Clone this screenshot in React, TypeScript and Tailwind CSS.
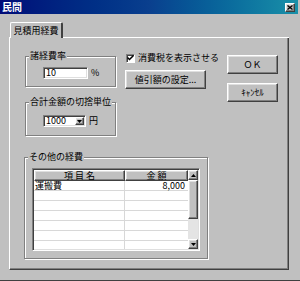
import React from 'react';

const raised =
  'border border-t-white border-l-white border-r-[#404040] border-b-[#404040] shadow-[inset_-1px_-1px_0_#808080,inset_1px_1px_0_#dfdfdf]';
const sunken =
  'border border-t-[#808080] border-l-[#808080] border-r-white border-b-white shadow-[inset_1px_1px_0_#404040,inset_-1px_-1px_0_#dfdfdf] p-[1px]';

function GroupBox({ label, className, children }: { label: string; className: string; children?: React.ReactNode }) {
  return (
    <fieldset className={`min-w-0 border border-[#808080] shadow-[1px_1px_0_#fff,inset_1px_1px_0_#fff] ${className}`}>
      <legend className="ml-[3px] px-[1px] bg-[#c0c0c0] leading-[10px] whitespace-nowrap">{label}</legend>
      {children}
    </fieldset>
  );
}

function Arrow({ down }: { down?: boolean }) {
  return (
    <svg width="5" height="3" viewBox="0 0 5 3">
      <polygon points={down ? '0,0 5,0 2.5,3' : '0,3 5,3 2.5,0'} fill="#000" />
    </svg>
  );
}

export default function App() {
  const rows = ['運搬費', '', '', '', '', '', ''];
  return (
    <div className="w-[300px] h-[281px] bg-[#c0c0c0] flex flex-col border-b border-b-[#404040] pr-[2px] font-['Noto_Sans_CJK_JP',sans-serif] text-[9px] leading-[10px] text-black">
      {/* title bar */}
      <div className="h-[14px] shrink-0 flex items-center justify-between bg-linear-to-r from-[#000a78] via-[#0a3f8e] to-[#1a90a8] pl-[2px] pr-[3px]">
        <span className="text-white font-bold text-[10px] leading-[10px]">民間</span>
        <div className={`w-[10px] h-[9px] bg-[#c0c0c0] flex items-center justify-center ${raised}`}>
          <svg width="6" height="5" viewBox="0 0 6 5">
            <path d="M0.5 0.5 L5.5 4.5 M5.5 0.5 L0.5 4.5" stroke="#000" strokeWidth="1.3" />
          </svg>
        </div>
      </div>

      <div className="h-[266px] shrink-0 flex flex-col pl-[9px] pt-[8px] pr-[9px]">
        {/* tab strip */}
        <div className="h-[16px] shrink-0 flex items-end">
          <div className="w-[1px] h-[1px] bg-white" />
          <div className="w-[53px] h-[16px] border-l border-t border-white border-r-2 border-r-[#404040] rounded-t-[2px] flex items-center justify-center">
            見積用経費
          </div>
          <div className="flex-1 h-[1px] bg-white" />
        </div>

        {/* panel */}
        <div className="h-[232px] shrink-0 flex flex-col border-l border-l-white border-r border-r-[#404040] border-b border-b-[#404040] shadow-[inset_-1px_-1px_0_#808080] pl-[15px] pt-[13px]">
          <div className="flex items-start">
            <div className="w-[91px] flex flex-col">
              <GroupBox label="諸経費率" className="h-[36px]">
                <div className="flex items-center pl-[17px] pt-[6px]">
                  <div className={`w-[45px] h-[12px] bg-white flex items-center pl-[2px] ${sunken}`}>10</div>
                  <span className="ml-[3px]">%</span>
                </div>
              </GroupBox>
              <GroupBox label="合計金額の切捨単位" className="mt-[10px] h-[39px]">
                <div className="flex items-center pl-[17px] pt-[8px]">
                  <div className={`w-[43px] h-[12px] bg-white flex items-center ${sunken}`}>
                    <span className="flex-1 pl-[1px]">1000</span>
                    <div className={`w-[9px] h-[8px] bg-[#c0c0c0] flex items-center justify-center ${raised}`}>
                      <Arrow down />
                    </div>
                  </div>
                  <span className="ml-[3px]">円</span>
                </div>
              </GroupBox>
            </div>

            <div className="ml-[9px] w-[81px] flex flex-col">
              <div className="mt-[2px] ml-[1px] flex items-center">
                <div className="w-[9px] h-[9px] shrink-0 bg-white flex items-center justify-center border border-t-[#808080] border-l-[#808080] border-r-white border-b-white shadow-[inset_1px_1px_0_#404040]">
                  <svg width="7" height="6" viewBox="0 0 7 6">
                    <path d="M0.5 2.5 L2.5 4.5 L6.5 0.5" stroke="#000" strokeWidth="1.5" fill="none" />
                  </svg>
                </div>
                <span className="ml-[3px] whitespace-nowrap">消費税を表示させる</span>
              </div>
              <div className={`mt-[7px] h-[19px] bg-[#c0c0c0] flex items-center justify-center whitespace-nowrap ${raised}`}>
                値引額の設定...
              </div>
            </div>

            <div className="ml-[21px] w-[51px] flex flex-col">
              <div className={`mt-[4px] h-[19px] bg-[#c0c0c0] flex items-center justify-center ${raised}`}>ＯＫ</div>
              <div className={`mt-[9px] h-[19px] bg-[#c0c0c0] flex items-center justify-center ${raised}`}>ｷｬﾝｾﾙ</div>
            </div>
          </div>

          <GroupBox label="その他の経費" className="mt-[16px] -ml-[1px] w-[184px] h-[107px] shrink-0">
            <div className="pl-[7px] pt-[6px]">
              <div className={`w-[168px] h-[83px] bg-white flex ${sunken}`}>
                <div className="w-[154px] flex flex-col">
                  <div className="h-[11px] shrink-0 flex">
                    <div className={`w-[91px] bg-[#c0c0c0] flex items-center justify-center ${raised}`}>項 目 名</div>
                    <div className={`flex-1 bg-[#c0c0c0] flex items-center justify-center ${raised}`}>金 額</div>
                  </div>
                  {rows.map((r, i) => (
                    <div key={i} className={`shrink-0 flex ${i < 6 ? 'h-[10px] border-b border-[#d8d8d8]' : 'h-[8px]'}`}>
                      <div className="w-[91px] border-r border-[#d8d8d8] pl-[1px] leading-[10px]">{r}</div>
                      <div className="flex-1 text-right pr-[3px] leading-[10px]">{i === 0 ? '8,000' : ''}</div>
                    </div>
                  ))}
                </div>
                <div className="w-[10px] flex flex-col">
                  <div className={`h-[10px] bg-[#c0c0c0] flex items-center justify-center ${raised}`}>
                    <Arrow />
                  </div>
                  <div className={`h-[39px] bg-[#c0c0c0] ${raised}`} />
                  <div className="flex-1 bg-[#e4e4e4]" />
                  <div className={`h-[10px] bg-[#c0c0c0] flex items-center justify-center ${raised}`}>
                    <Arrow down />
                  </div>
                </div>
              </div>
            </div>
          </GroupBox>
        </div>
      </div>
    </div>
  );
}
